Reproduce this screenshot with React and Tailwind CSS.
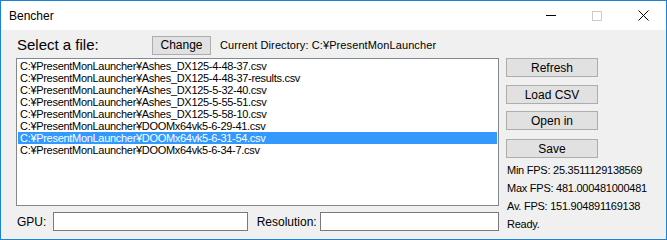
import { useState } from 'react'

const files = [
  'C:¥PresentMonLauncher¥Ashes_DX125-4-48-37.csv',
  'C:¥PresentMonLauncher¥Ashes_DX125-4-48-37-results.csv',
  'C:¥PresentMonLauncher¥Ashes_DX125-5-32-40.csv',
  'C:¥PresentMonLauncher¥Ashes_DX125-5-55-51.csv',
  'C:¥PresentMonLauncher¥Ashes_DX125-5-58-10.csv',
  'C:¥PresentMonLauncher¥DOOMx64vk5-6-29-41.csv',
  'C:¥PresentMonLauncher¥DOOMx64vk5-6-31-54.csv',
  'C:¥PresentMonLauncher¥DOOMx64vk5-6-34-7.csv',
]

const sideButtons = [
  { name: 'Refresh', cls: 'mt-[1px]' },
  { name: 'Load CSV', cls: 'mt-[8px]' },
  { name: 'Open in', cls: 'mt-[7px]' },
  { name: 'Save', cls: 'mt-[9px]' },
]

function WinButton({ children, className = '' }) {
  return (
    <button
      className={`h-[19px] bg-[#e1e1e1] border border-[#adadad] text-[12px] leading-none text-black ${className}`}
    >
      {children}
    </button>
  )
}

export default function App() {
  const [selected, setSelected] = useState(6)

  return (
    <div
      className="w-[667px] h-[240px] flex flex-col border border-[#1883d7] bg-[#f0f0f0] overflow-hidden"
      style={{ fontFamily: '"Liberation Sans", "Noto Sans CJK JP", sans-serif' }}
    >
      {/* title bar */}
      <div className="h-[29px] bg-white flex items-center pl-[8px]">
        <span className="text-[12px] text-black">Bencher</span>
        <div className="ml-auto flex items-center h-full">
          <div className="w-[46px] h-full flex items-center justify-center">
            <div className="w-[10px] h-[1px] bg-black" />
          </div>
          <div className="w-[46px] h-full flex items-center justify-center">
            <div className="w-[10px] h-[10px] border border-[#cccccc]" />
          </div>
          <div className="w-[46px] h-full flex items-center justify-center">
            <svg width="11" height="11" viewBox="0 0 11 11">
              <path d="M0.5 0.5 L10.5 10.5 M10.5 0.5 L0.5 10.5" stroke="#000" strokeWidth="1" />
            </svg>
          </div>
        </div>
      </div>

      {/* body */}
      <div className="flex pl-[15px] pt-[5px]">
        <div className="w-[483px] flex flex-col">
          <div className="h-[20px] flex items-center">
            <span className="w-[136px] text-[15px] text-black pl-[1px] mt-[1px]">Select a file:</span>
            <WinButton className="w-[59px]">Change</WinButton>
            <span className="ml-[9px] text-[11px] text-black tracking-[0.1px]">
              Current Directory: C:¥PresentMonLauncher
            </span>
          </div>
          <div className="mt-[3px] h-[148px] bg-white border border-[#828790] pt-[1px] px-[1px]">
            {files.map((f, i) => (
              <div
                key={f}
                onClick={() => setSelected(i)}
                className={`h-[12px] leading-[12px] text-[11px] tracking-[-0.3px] pl-[2px] whitespace-nowrap ${
                  i === selected ? 'bg-[#3399ff] text-white' : 'text-black'
                }`}
              >
                {f}
              </div>
            ))}
          </div>
          <div className="mt-[6px] flex items-center h-[19px]">
            <span className="w-[37px] text-[12px] text-black pl-[1px]">GPU:</span>
            <input className="w-[195px] h-[19px] bg-white border border-[#7a7a7a] outline-none" />
            <span className="ml-[9px] w-[64px] text-[12px] text-black">Resolution:</span>
            <input className="w-[179px] h-[19px] bg-white border border-[#7a7a7a] outline-none" />
          </div>
        </div>

        <div className="ml-[7px] flex flex-col pt-[22px]">
          {sideButtons.map((b) => (
            <WinButton key={b.name} className={`w-[92px] ${b.cls}`}>
              {b.name}
            </WinButton>
          ))}
          <div className="mt-[3px] flex flex-col text-[11px] tracking-[-0.25px] text-black leading-[18px] pl-[1px]">
            <span>Min FPS: 25.3511129138569</span>
            <span>Max FPS: 481.000481000481</span>
            <span>Av. FPS: 151.904891169138</span>
            <span>Ready.</span>
          </div>
        </div>
      </div>
    </div>
  )
}
